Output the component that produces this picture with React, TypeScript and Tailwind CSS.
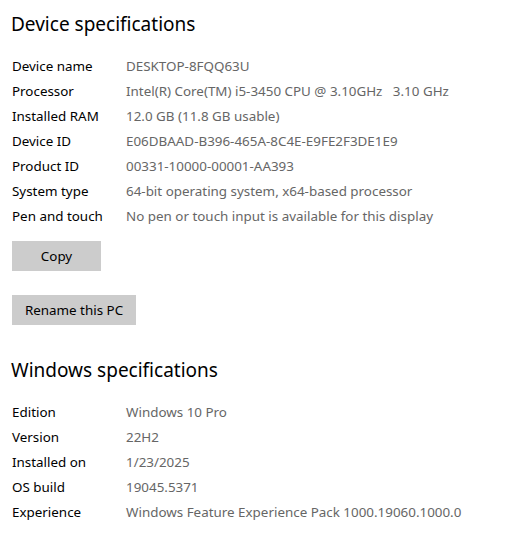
import React from 'react';

const device: [string, string][] = [
  ['Device name', 'DESKTOP-8FQQ63U'],
  ['Processor', 'Intel(R) Core(TM) i5-3450 CPU @ 3.10GHz\u00a0\u00a0\u00a03.10 GHz'],
  ['Installed RAM', '12.0 GB (11.8 GB usable)'],
  ['Device ID', 'E06DBAAD-B396-465A-8C4E-E9FE2F3DE1E9'],
  ['Product ID', '00331-10000-00001-AA393'],
  ['System type', '64-bit operating system, x64-based processor'],
  ['Pen and touch', 'No pen or touch input is available for this display'],
];

const windows: [string, string][] = [
  ['Edition', 'Windows 10 Pro'],
  ['Version', '22H2'],
  ['Installed on', '1/23/2025'],
  ['OS build', '19045.5371'],
  ['Experience', 'Windows Feature Experience Pack 1000.19060.1000.0'],
];

const Rows: React.FC<{ rows: [string, string][] }> = ({ rows }) => (
  <div className="flex flex-col">
    {rows.map(([k, v]) => (
      <div key={k} className="flex h-[25px] items-center text-[13.4px]">
        <span className="w-[114px] shrink-0 text-black">{k}</span>
        <span className="whitespace-nowrap text-[#666666]">{v}</span>
      </div>
    ))}
  </div>
);

const App: React.FC = () => {
  return (
    <div className="h-[533px] w-[520px] overflow-hidden bg-white pl-[12px] font-['Noto_Sans',sans-serif]">
      <h2 className="-ml-px pt-[9px] text-[19px] leading-[30px] text-black">Device specifications</h2>
      <div className="mt-[15px]">
        <Rows rows={device} />
      </div>
      <button className="mt-[12px] block h-[30px] w-[89px] bg-[#cccccc] text-[13.4px] text-black">Copy</button>
      <button className="mt-[24px] block h-[30px] w-[124px] bg-[#cccccc] text-[13.4px] text-black">Rename this PC</button>
      <h2 className="-ml-px mt-[30px] text-[19px] leading-[30px] text-black">Windows specifications</h2>
      <div className="mt-[15px]">
        <Rows rows={windows} />
      </div>
    </div>
  );
};

export default App;
